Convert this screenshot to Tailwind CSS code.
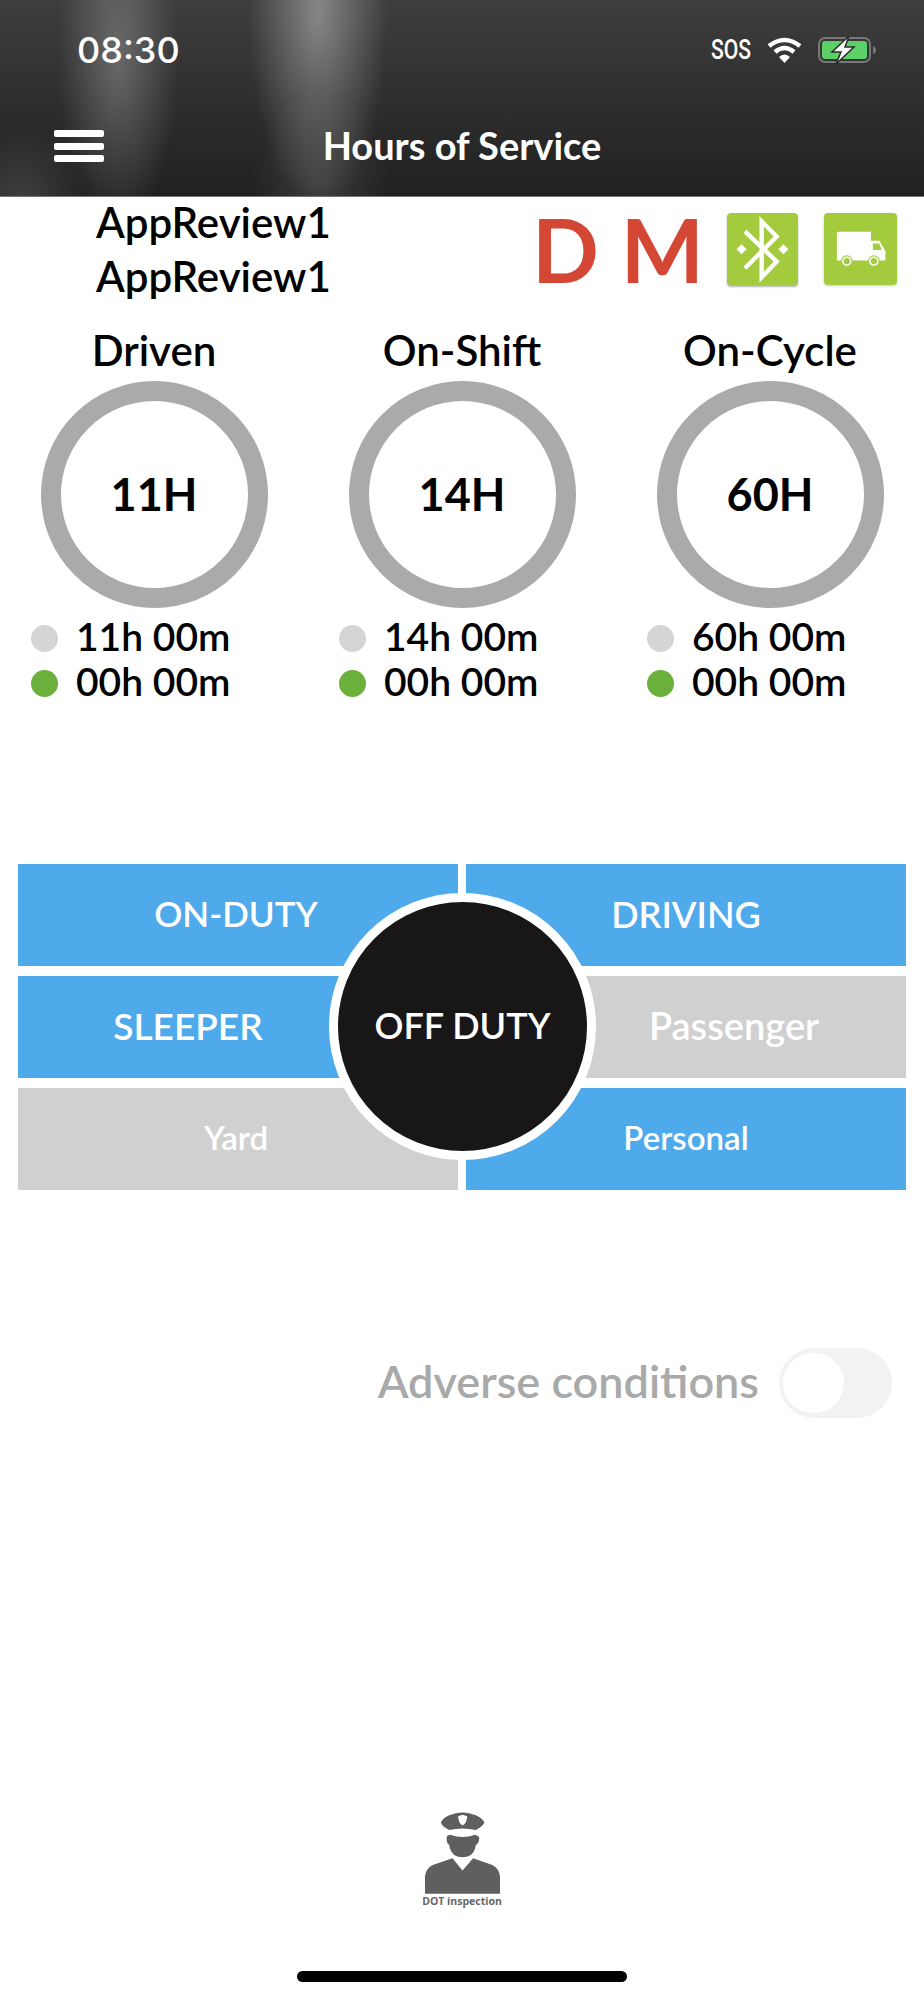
<!DOCTYPE html>
<html lang="en">
<head>
    <meta charset="UTF-8">
    <meta name="viewport" content="width=device-width, initial-scale=1.0">
    <title>Hours of Service</title>
    <script src="https://cdn.jsdelivr.net/npm/@tailwindcss/browser@4"></script>
</head>
<body class="bg-white font-['Lato',sans-serif] text-black">
<div class="relative w-[924px] h-[2000px] overflow-hidden">

    <!-- Header -->
    <header class="relative h-[197px] border-b border-[#777] text-white bg-[radial-gradient(ellipse_60px_175px_at_118px_60px,rgba(255,255,255,0.26),transparent),radial-gradient(ellipse_70px_190px_at_318px_15px,rgba(255,255,255,0.38),transparent),radial-gradient(ellipse_70px_100px_at_320px_190px,rgba(255,255,255,0.12),transparent),radial-gradient(ellipse_70px_70px_at_20px_200px,rgba(255,255,255,0.14),transparent),linear-gradient(to_bottom,#3e3e3e,#202020)]">
        <div class="flex items-center justify-between h-[100px] pl-[77px] pr-[47px]">
            <span class="font-['Inter',sans-serif] text-[36px] font-medium leading-none">08:30</span>
            <div class="flex items-center">
                <span class="font-['Roboto',sans-serif] text-[27px] font-medium leading-none scale-x-[0.78] origin-right w-[39px] flex justify-end">SOS</span>
                <svg class="ml-[16px]" width="35" height="26" viewBox="0 0 35 26" fill="none">
                    <path d="M2 9 Q17.500 -3 33 9" stroke="white" stroke-width="4.500"/>
                    <path d="M8 15 Q17.500 7 27 15" stroke="white" stroke-width="4.500"/>
                    <path d="M12 20 Q17.500 15 23 20 L17.500 26 Z" fill="white"/>
                </svg>
                <svg class="ml-[16px]" width="59" height="28" viewBox="0 0 59 28" fill="none">
                    <rect x="1" y="2" width="51" height="24" rx="6" stroke="#777" stroke-width="2"/>
                    <rect x="4" y="5" width="45" height="18" rx="3" fill="#5dd068"/>
                    <path d="M55 10 Q58 11 58 14 Q58 17 55 18 Z" fill="#777"/>
                    <path d="M31 0 L14 16 H23 L18 28 L36 11 H27 Z" fill="white" stroke="#2b2b2b" stroke-width="1.500"/>
                </svg>
            </div>
        </div>
        <div class="flex items-center h-[92px] pl-[54px]">
            <div class="flex flex-col gap-[5.500px] w-[50px]">
                <span class="h-[7px] rounded-[2px] bg-white"></span>
                <span class="h-[7px] rounded-[2px] bg-white"></span>
                <span class="h-[7px] rounded-[2px] bg-white"></span>
            </div>
            <h1 class="absolute left-0 right-0 top-[125px] text-center text-[38px] font-bold leading-[40px]">Hours of Service</h1>
        </div>
    </header>

    <!-- Driver + status icons -->
    <section class="flex justify-between h-[126px] pl-[96px] pr-[27px]">
        <div class="-mt-[2px] text-[42px] font-semibold leading-[54px]">
            <p>AppReview1</p>
            <p>AppReview1</p>
        </div>
        <div class="flex items-start pt-[16px]">
            <span class="text-[88px] font-bold leading-[72px] text-[#d54735]">D</span>
            <span class="ml-[22px] text-[88px] font-bold leading-[72px] text-[#d54735]">M</span>
            <div class="ml-[23px] w-[71px] h-[72px] rounded-[4px] bg-[#a4cb3e] shadow-[0_2px_2px_rgba(0,0,0,0.3)]">
                <svg width="71" height="72" viewBox="0 0 211 215" fill="none">
                    <path d="M53 55 L148 145 L103 192 V25 L148 70 L53 165" stroke="white" stroke-width="13"/>
                    <path d="M43 93 L58 108 L43 123 L28 108 Z M168 93 L183 108 L168 123 L153 108 Z" fill="white"/>
                </svg>
            </div>
            <div class="ml-[26px] w-[73px] h-[72px] rounded-[4px] bg-[#a4cb3e] shadow-[0_1px_3px_rgba(0,0,0,0.2)]">
                <svg width="73" height="72" viewBox="0 0 217 218" fill="none">
                    <path d="M37 62 Q37 57 42 57 H140 V84 H166 L184 116 V144 H37 Z" fill="white"/>
                    <path d="M146 92 H165 L173 112 H146 Z" fill="#a4cb3e"/>
                    <circle cx="67" cy="146" r="18" fill="#a4cb3e"/>
                    <circle cx="149" cy="146" r="18" fill="#a4cb3e"/>
                    <circle cx="67" cy="146" r="12" fill="none" stroke="white" stroke-width="5"/>
                    <circle cx="149" cy="146" r="12" fill="none" stroke="white" stroke-width="5"/>
                </svg>
            </div>
        </div>
    </section>

    <!-- Hour rings -->
    <section class="grid grid-cols-[308px_308px_308px] pl-0">
        <div class="flex flex-col items-center">
            <p class="text-[42px] font-semibold leading-[54px]">Driven</p>
            <div class="mt-[4px] flex items-center justify-center w-[227px] h-[227px] rounded-full border-[20px] border-[#aaaaaa]">
                <span class="text-[45px] font-bold leading-none">11H</span>
            </div>
            <div class="mt-[8px] self-start pl-[31px] text-[39px] font-semibold leading-[45px]">
                <div class="flex items-center gap-[18px]"><span class="w-[27px] h-[27px] rounded-full bg-[#d5d5d5]"></span><span class="-translate-y-[2px]">11h 00m</span></div>
                <div class="flex items-center gap-[18px]"><span class="w-[27px] h-[27px] rounded-full bg-[#6ab03b]"></span><span class="-translate-y-[2px]">00h 00m</span></div>
            </div>
        </div>
        <div class="flex flex-col items-center">
            <p class="text-[42px] font-semibold leading-[54px]">On-Shift</p>
            <div class="mt-[4px] flex items-center justify-center w-[227px] h-[227px] rounded-full border-[20px] border-[#aaaaaa]">
                <span class="text-[45px] font-bold leading-none">14H</span>
            </div>
            <div class="mt-[8px] self-start pl-[31px] text-[39px] font-semibold leading-[45px]">
                <div class="flex items-center gap-[18px]"><span class="w-[27px] h-[27px] rounded-full bg-[#d5d5d5]"></span><span class="-translate-y-[2px]">14h 00m</span></div>
                <div class="flex items-center gap-[18px]"><span class="w-[27px] h-[27px] rounded-full bg-[#6ab03b]"></span><span class="-translate-y-[2px]">00h 00m</span></div>
            </div>
        </div>
        <div class="flex flex-col items-center">
            <p class="text-[42px] font-semibold leading-[54px]">On-Cycle</p>
            <div class="mt-[4px] flex items-center justify-center w-[227px] h-[227px] rounded-full border-[20px] border-[#aaaaaa]">
                <span class="text-[45px] font-bold leading-none">60H</span>
            </div>
            <div class="mt-[8px] self-start pl-[31px] text-[39px] font-semibold leading-[45px]">
                <div class="flex items-center gap-[18px]"><span class="w-[27px] h-[27px] rounded-full bg-[#d5d5d5]"></span><span class="-translate-y-[2px]">60h 00m</span></div>
                <div class="flex items-center gap-[18px]"><span class="w-[27px] h-[27px] rounded-full bg-[#6ab03b]"></span><span class="-translate-y-[2px]">00h 00m</span></div>
            </div>
        </div>
    </section>

    <!-- Duty status selector -->
    <section class="absolute left-[18px] top-[864px] w-[888px] grid grid-cols-[440px_440px] gap-x-[8px] gap-y-[10px] text-white font-semibold">
        <div class="flex items-center justify-center h-[102px] pb-[3px] pr-[4px] bg-[#4eaaea] text-[35px]">ON-DUTY</div>
        <div class="flex items-center justify-center h-[102px] pb-[3px] bg-[#4eaaea] text-[36px]">DRIVING</div>
        <div class="flex items-center justify-center h-[102px] pb-[3px] pr-[100px] bg-[#4eaaea] text-[37px]">SLEEPER</div>
        <div class="flex items-center justify-center h-[102px] pb-[3px] pl-[96px] bg-[#d0d0d0] text-[38px]">Passenger</div>
        <div class="flex items-center justify-center h-[102px] pb-[3px] pr-[4px] bg-[#d0d0d0] text-[33px]">Yard</div>
        <div class="flex items-center justify-center h-[102px] pb-[3px] bg-[#4eaaea] text-[33px]">Personal</div>
        <div class="absolute left-[311px] top-[29px] flex items-center justify-center w-[267px] h-[267px] pb-[3px] rounded-full border-[9px] border-white bg-[#181617] text-[36px]">OFF DUTY</div>
    </section>

    <!-- Adverse conditions -->
    <section class="absolute right-[32px] top-[1348px] flex items-center gap-[20px]">
        <span class="pb-[3px] text-[45px] font-semibold leading-none text-[#a9a9a9]">Adverse conditions</span>
        <div class="relative w-[113px] h-[70px] rounded-full bg-[#f2f2f2]">
            <span class="absolute left-[4px] top-[5px] w-[61px] h-[60px] rounded-full bg-white"></span>
        </div>
    </section>

    <!-- DOT inspection -->
    <div class="absolute left-[402px] top-[1810px] w-[120px] flex flex-col items-center text-[#666666]">
        <svg width="83" height="85" viewBox="180 90 250 255" fill="#5f5f5f">
            <path d="M240 127 C245 110 280 97 305 97 C330 97 365 110 371 127 C365 140 352 145 345 150 Q305 140 265 150 C258 145 245 140 240 127Z"/>
            <path d="M292 108 L305 104 L319 108 Q319 128 305 136 Q292 128 292 108Z" fill="white"/>
            <path d="M258 168 Q262 165 268 164 Q305 178 343 164 L355 170 Q356 190 345 195 Q340 232 305 232 Q270 232 265 195 Q255 190 258 168Z"/>
            <path d="M192 342 L192 290 Q195 265 215 255 L275 235 L305 272 L337 235 L395 255 Q415 265 418 290 L418 342Z"/>
        </svg>
        <span class="text-[10.500px] font-bold leading-[12px] font-['Open_Sans',sans-serif] whitespace-nowrap">DOT inspection</span>
    </div>

    <!-- Home indicator -->
    <div class="absolute left-[297px] top-[1971px] w-[330px] h-[11px] rounded-full bg-black"></div>
</div>
</body>
</html>
